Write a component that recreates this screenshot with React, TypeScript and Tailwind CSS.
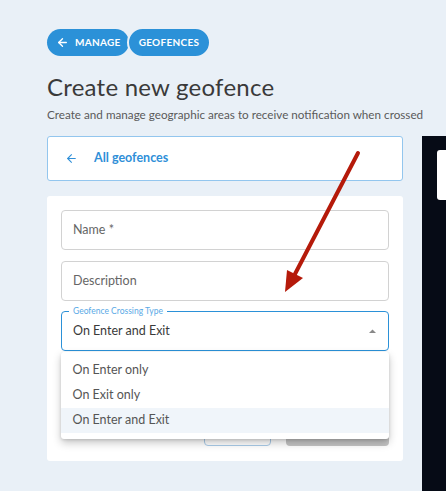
import React from 'react';
import { ArrowLeft } from 'lucide-react';

const OPTIONS = ['On Enter only', 'On Exit only', 'On Enter and Exit'];

export default function App() {
  const selected = 'On Enter and Exit';

  return (
    <div
      className="relative w-[446px] h-[491px] overflow-hidden bg-[#e9f0f7]"
      style={{ fontFamily: 'Lato, "Open Sans", sans-serif' }}
    >
      {/* header */}
      <div className="pl-[47px] pt-[27px]">
        <div className="flex items-center">
          <button className="h-[27px] pl-[9px] pr-[8px] flex items-center gap-[6px] rounded-full bg-[#2b91d8] text-white text-[10px] font-bold tracking-[0.03em]">
            <ArrowLeft size={13} strokeWidth={2.5} />
            MANAGE
          </button>
          <button className="-ml-[2px] h-[31px] px-[10px] flex items-center rounded-full bg-[#2b91d8] border-2 border-[#e9f0f7] text-white text-[10px] font-bold tracking-[0.03em]">
            GEOFENCES
          </button>
        </div>
        <h1 className="mt-[14px] text-[24px] leading-[30px] font-normal text-[#3a3a3a] tracking-[0.01em]">Create new geofence</h1>
        <p className="mt-[5px] text-[11.7px] leading-[14px] text-[#5a5a5a] whitespace-nowrap">
          Create and manage geographic areas to receive notification when crossed
        </p>
      </div>

      <div className="flex mt-[15px]">
        {/* left column */}
        <div className="ml-[47px] w-[356px] flex flex-col gap-[15px]">
          <div className="h-[45px] bg-white border border-[#93c6ee] rounded-[3px] flex items-center pl-[17px] gap-[16px] text-[#2f8fd8]">
            <ArrowLeft size={13} strokeWidth={2} />
            <span className="text-[12.5px] font-bold">All geofences</span>
          </div>

          <div className="h-[265px] bg-white rounded-[3px] px-[14px] pt-[14px] flex flex-col">
            <div className="h-[40px] border border-[#d2d2d2] rounded-[4px] flex items-center px-[11px] text-[12.5px] text-[#666]">
              Name *
            </div>
            <div className="mt-[11px] h-[40px] border border-[#d2d2d2] rounded-[4px] flex items-center px-[11px] text-[12.5px] text-[#666]">
              Description
            </div>

            <div className="relative mt-[10px] h-[40px] border-[1.5px] border-[#2b91d8] rounded-[4px] flex items-center px-[11px]">
              <span className="absolute -top-[7px] left-[7px] px-[4px] bg-white text-[8.5px] leading-[12px] text-[#5aa9e6]">
                Geofence Crossing Type
              </span>
              <span className="flex-1 text-[12.5px] text-[#3a3a3a]">{selected}</span>
              <svg width="7" height="4" viewBox="0 0 7 4" className="mr-[1px]">
                <path d="M0 4 L3.5 0.5 L7 4 Z" fill="#888" />
              </svg>

              <div className="absolute left-[-1.5px] top-[40px] z-10 w-[328px] bg-white rounded-[3px] py-[6px] shadow-[0_4px_8px_rgba(0,0,0,0.22),0_1px_3px_rgba(0,0,0,0.12)]">
                {OPTIONS.map(o => (
                  <div
                    key={o}
                    className={`h-[25px] flex items-center pl-[12px] text-[12.5px] text-[#555] ${o === selected ? 'bg-[#f0f5fa]' : ''}`}
                  >
                    {o}
                  </div>
                ))}
              </div>
            </div>

            <div className="mt-auto mb-[15px] flex justify-end gap-[15px]">
              <button className="w-[67px] h-[36px] border border-[#a9cbe8] rounded-[4px] bg-white" />
              <button className="w-[103px] h-[36px] rounded-[4px] bg-[#c4c4c4]" />
            </div>
          </div>
        </div>

        {/* right dark panel */}
        <div className="ml-[19px] flex-1 h-[360px] bg-[#060b16] pt-[14px] pl-[15px]">
          <div className="h-[50px] bg-white rounded-l-[3px]" />
        </div>
      </div>

      {/* red annotation arrow */}
      <svg className="absolute left-0 top-0 pointer-events-none" width="446" height="491">
        <line x1="358" y1="153" x2="295" y2="274" stroke="#b51a0a" strokeWidth="4" strokeLinecap="round" />
        <path d="M285 292 L287 270 L303 278 Z" fill="#b51a0a" />
      </svg>
    </div>
  );
}
